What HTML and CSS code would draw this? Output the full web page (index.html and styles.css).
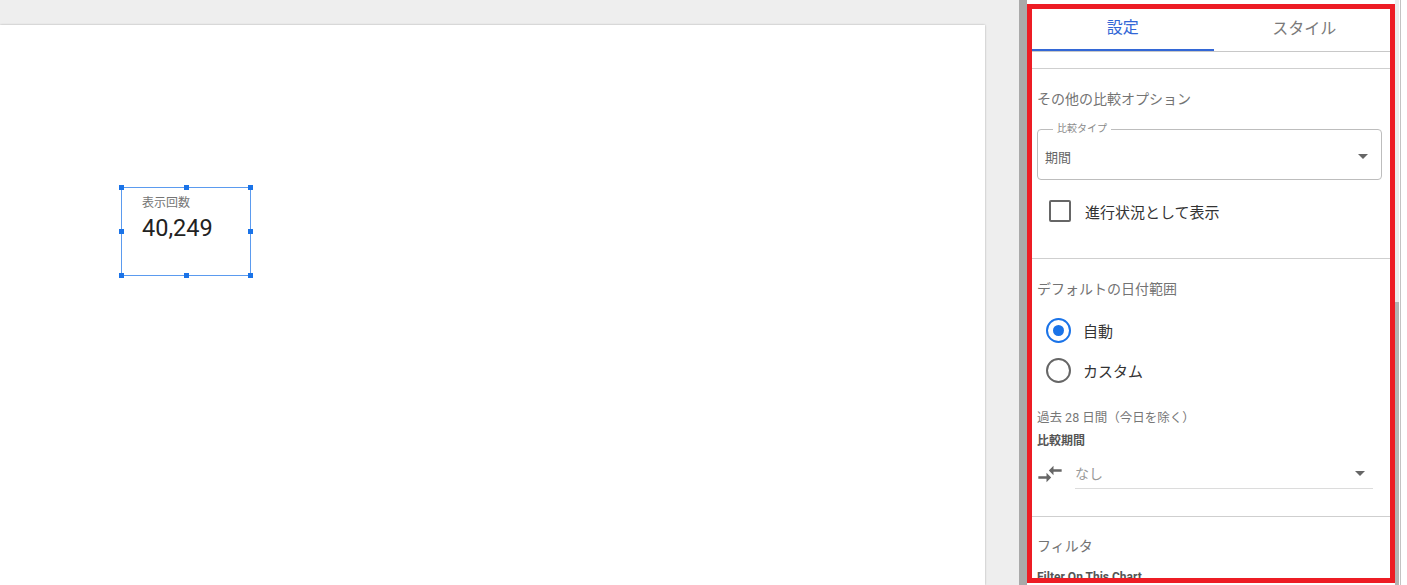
FILE: index.html
```html
<!DOCTYPE html>
<html lang="ja">
<head>
    <meta charset="UTF-8">
    <meta name="viewport" content="width=device-width, initial-scale=1.0">
    <title>レポート編集</title>
    <link rel="stylesheet" href="styles.css">
</head>
<body>
    <div class="app">
        <div class="workspace">
            <div class="canvas">
                <div class="scorecard">
                    <div class="scorecard-label">表示回数</div>
                    <div class="scorecard-value">40,249</div>
                    <span class="handle h-tl"></span>
                    <span class="handle h-tc"></span>
                    <span class="handle h-tr"></span>
                    <span class="handle h-ml"></span>
                    <span class="handle h-mr"></span>
                    <span class="handle h-bl"></span>
                    <span class="handle h-bc"></span>
                    <span class="handle h-br"></span>
                </div>
            </div>
        </div>

        <div class="sash"></div>

        <div class="panel">
            <div class="tabs">
                <div class="tab active">設定</div>
                <div class="tab">スタイル</div>
            </div>

            <div class="section section-compare">
                <div class="section-title">その他の比較オプション</div>
                <div class="outlined">
                    <span class="outlined-label">比較タイプ</span>
                    <span class="outlined-value">期間</span>
                    <span class="caret"></span>
                </div>
                <label class="check-row">
                    <span class="checkbox"></span>
                    <span>進行状況として表示</span>
                </label>
            </div>

            <div class="section section-dates">
                <div class="section-title">デフォルトの日付範囲</div>
                <div class="radio-list">
                    <label class="radio-row">
                        <span class="radio checked"></span>
                        <span>自動</span>
                    </label>
                    <label class="radio-row">
                        <span class="radio"></span>
                        <span>カスタム</span>
                    </label>
                </div>
                <div class="hint">過去 28 日間（今日を除く）</div>
                <div class="field-title">比較期間</div>
                <div class="compare-row">
                    <svg class="compare-icon" viewBox="0 0 24 24" width="28" height="28">
                        <path d="M9.01 14H2v2h7.01v3L13 15l-3.99-4v3zm5.98-1v-3H22V8h-7.01V5L11 9l3.99 4z"/>
                    </svg>
                    <div class="underlined">
                        <span>なし</span>
                        <span class="caret"></span>
                    </div>
                </div>
            </div>

            <div class="section section-filter">
                <div class="section-title">フィルタ</div>
                <div class="field-title filter-title">Filter On This Chart</div>
            </div>
        </div>

        <div class="scrollbar">
            <div class="scroll-thumb"></div>
        </div>
        <div class="frame-edge"></div>
        <div class="frame-rest"></div>

        <div class="highlight"></div>
    </div>
</body>
</html>
```

FILE: styles.css
```css
body {
    margin: 0;
    background-color: #eeeeee;
    font-family: Roboto, "Noto Sans CJK JP", sans-serif;
    color: #333;
}
.app {
    position: relative;
    display: flex;
    height: 585px;
    overflow: hidden;
}
.workspace {
    width: 1019px;
    padding-top: 25px;
    box-sizing: border-box;
}
.canvas {
    position: relative;
    width: 985px;
    height: 560px;
    background-color: #fff;
    box-shadow: 0 0 2px rgba(0, 0, 0, 0.28);
}
.scorecard {
    position: absolute;
    left: 121px;
    top: 162px;
    width: 130px;
    height: 89px;
    box-sizing: border-box;
    border: 1px solid #5b9bef;
    padding: 7px 0 0 20px;
}
.scorecard-label {
    font-size: 12px;
    line-height: 16px;
    color: #757575;
}
.scorecard-value {
    margin-top: 3px;
    font-size: 23.5px;
    line-height: 28px;
    color: #222;
}
.handle {
    position: absolute;
    width: 5px;
    height: 5px;
    background-color: #1a73e8;
}
.h-tl { left: -3px; top: -3px; }
.h-tc { left: 62px; top: -3px; }
.h-tr { right: -3px; top: -3px; }
.h-ml { left: -3px; top: 41px; }
.h-mr { right: -3px; top: 41px; }
.h-bl { left: -3px; bottom: -3px; }
.h-bc { left: 62px; bottom: -3px; }
.h-br { right: -3px; bottom: -3px; }

.sash {
    width: 8px;
    background-color: #a9a9a9;
}
.panel {
    width: 368px;
    background-color: #fff;
}
.tabs {
    display: flex;
    margin-left: 5px;
    margin-bottom: 16px;
    border-bottom: 1px solid #c8c8c8;
}
.tab {
    flex: 1;
    height: 51px;
    box-sizing: border-box;
    display: flex;
    align-items: center;
    justify-content: center;
    padding-top: 2px;
    font-size: 16px;
    color: #7a7a7a;
}
.tab.active {
    color: #3367d6;
    border-bottom: 2px solid #3367d6;
}
.section {
    border-top: 1px solid #cfcfcf;
    padding: 20px 13px 0 10px;
}
.section-title {
    font-size: 14px;
    line-height: 20px;
    color: #737373;
}
.section-compare {
    padding-bottom: 35px;
}
.outlined {
    position: relative;
    margin-top: 20px;
    height: 51px;
    box-sizing: border-box;
    border: 1px solid #bdbdbd;
    border-radius: 4px;
    display: flex;
    align-items: center;
    justify-content: space-between;
    padding: 3px 13px 0 7px;
}
.outlined-label {
    position: absolute;
    left: 15px;
    top: -7px;
    padding: 0 4px;
    background-color: #fff;
    font-size: 10px;
    line-height: 12px;
    color: #8a8a8a;
}
.outlined-value {
    font-size: 13px;
    color: #666;
}
.caret {
    width: 0;
    height: 0;
    border-left: 5px solid transparent;
    border-right: 5px solid transparent;
    border-top: 5px solid #666;
}
.check-row {
    display: flex;
    align-items: center;
    gap: 14px;
    height: 24px;
    margin-top: 19px;
    padding-left: 12px;
    font-size: 15px;
    color: #333;
}
.checkbox {
    width: 22px;
    height: 22px;
    box-sizing: border-box;
    border: 2px solid #666;
    border-radius: 2px;
}
.section-dates {
    padding-bottom: 27px;
}
.radio-list {
    margin-top: 11px;
}
.radio-row {
    display: flex;
    align-items: center;
    gap: 12px;
    height: 40px;
    padding-left: 9px;
    font-size: 15px;
    color: #333;
}
.radio {
    width: 25px;
    height: 25px;
    box-sizing: border-box;
    border: 2px solid #666;
    border-radius: 50%;
    display: flex;
    align-items: center;
    justify-content: center;
}
.radio.checked {
    border-color: #1a73e8;
}
.radio.checked::after {
    content: "";
    width: 11px;
    height: 11px;
    border-radius: 50%;
    background-color: #1a73e8;
}
.hint {
    margin-top: 19px;
    font-size: 12.5px;
    line-height: 18px;
    color: #777;
}
.field-title {
    margin-top: 5px;
    font-size: 12px;
    line-height: 18px;
    font-weight: 700;
    color: #555;
}
.compare-row {
    display: flex;
    align-items: center;
    gap: 11px;
    margin-top: 8px;
    margin-left: -1px;
}
.compare-icon {
    fill: #666;
}
.underlined {
    flex: 1;
    margin-right: 9px;
    height: 30px;
    border-bottom: 1px solid #dcdcdc;
    display: flex;
    align-items: center;
    justify-content: space-between;
    padding-right: 8px;
    font-size: 14px;
    color: #999;
}
.section-filter {
    padding-top: 19px;
}
.filter-title {
    margin-top: 13px;
    line-height: 16px;
}

.scrollbar {
    width: 4px;
    display: flex;
    flex-direction: column;
    background-color: #ececec;
    border-right: 1px solid #fff;
}
.scroll-thumb {
    margin-top: 302px;
    flex: 1;
    background-color: #b3b3b3;
}
.frame-edge {
    width: 1px;
    background-color: #c3c3c3;
}
.frame-rest {
    flex: 1;
    background-color: #fff;
}
.highlight {
    position: absolute;
    left: 1027px;
    top: 4px;
    width: 368px;
    height: 579px;
    box-sizing: border-box;
    border: 5px solid #ed1c24;
}
```
